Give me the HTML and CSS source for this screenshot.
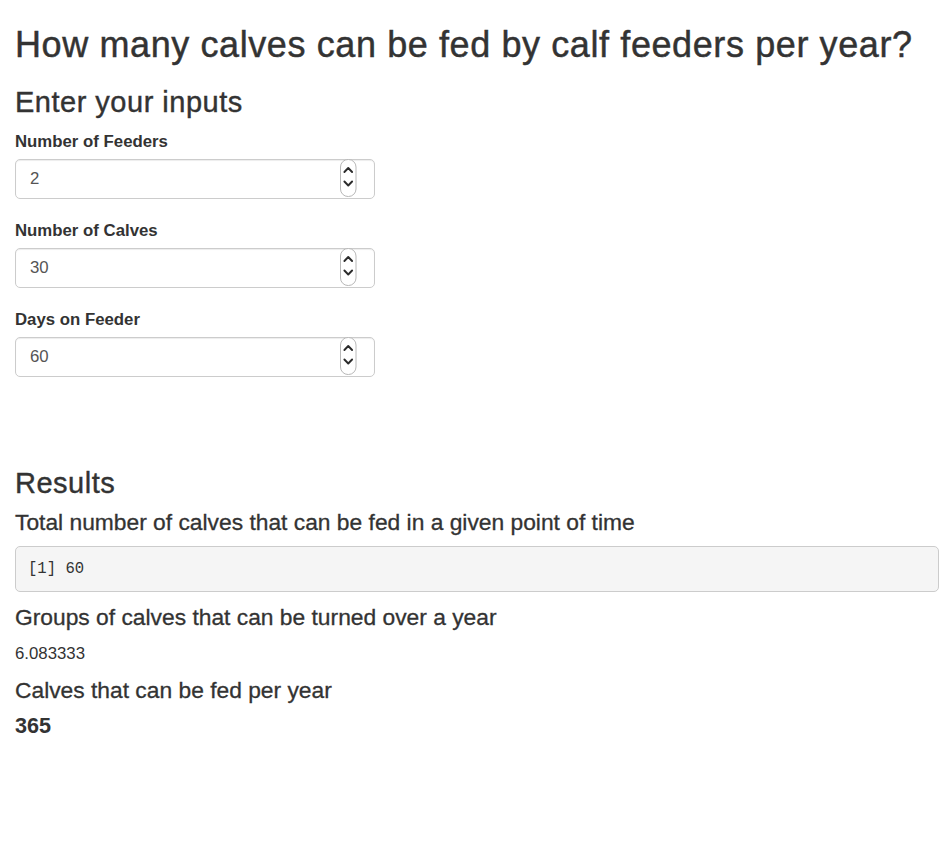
FILE: index.html
```html
<!DOCTYPE html>
<html lang="en">
<head>
<meta charset="utf-8">
<title>Calf feeders</title>
<link rel="stylesheet" href="styles.css">
</head>
<body>
<div class="page">
  <h2 class="title">How many calves can be fed by calf feeders per year?</h2>
  <h3 class="section">Enter your inputs</h3>
  <div class="inputs">
    <div class="field">
      <label class="field-label" for="feeders">Number of Feeders</label>
      <div class="num-input">
        <input id="feeders" class="num-value" type="text" value="2">
        <svg class="spinner" width="17" height="40" viewBox="0 0 17 40"><rect x="0.5" y="1.5" width="15.5" height="37" rx="7.5" fill="#fff" stroke="#b8b8b8"/><path d="M4.4 14 L8.25 10 L12.1 14" fill="none" stroke="#2b2b2b" stroke-width="1.9" stroke-linecap="round" stroke-linejoin="round"/><path d="M4.4 23.5 L8.25 27.5 L12.1 23.5" fill="none" stroke="#2b2b2b" stroke-width="1.9" stroke-linecap="round" stroke-linejoin="round"/></svg>
      </div>
    </div>
    <div class="field">
      <label class="field-label" for="calves">Number of Calves</label>
      <div class="num-input">
        <input id="calves" class="num-value" type="text" value="30">
        <svg class="spinner" width="17" height="40" viewBox="0 0 17 40"><rect x="0.5" y="1.5" width="15.5" height="37" rx="7.5" fill="#fff" stroke="#b8b8b8"/><path d="M4.4 14 L8.25 10 L12.1 14" fill="none" stroke="#2b2b2b" stroke-width="1.9" stroke-linecap="round" stroke-linejoin="round"/><path d="M4.4 23.5 L8.25 27.5 L12.1 23.5" fill="none" stroke="#2b2b2b" stroke-width="1.9" stroke-linecap="round" stroke-linejoin="round"/></svg>
      </div>
    </div>
    <div class="field">
      <label class="field-label" for="days">Days on Feeder</label>
      <div class="num-input">
        <input id="days" class="num-value" type="text" value="60">
        <svg class="spinner" width="17" height="40" viewBox="0 0 17 40"><rect x="0.5" y="1.5" width="15.5" height="37" rx="7.5" fill="#fff" stroke="#b8b8b8"/><path d="M4.4 14 L8.25 10 L12.1 14" fill="none" stroke="#2b2b2b" stroke-width="1.9" stroke-linecap="round" stroke-linejoin="round"/><path d="M4.4 23.5 L8.25 27.5 L12.1 23.5" fill="none" stroke="#2b2b2b" stroke-width="1.9" stroke-linecap="round" stroke-linejoin="round"/></svg>
      </div>
    </div>
  </div>
  <div class="results">
    <h3 class="section results-title">Results</h3>
    <h4 class="sub sub-first">Total number of calves that can be fed in a given point of time</h4>
    <pre class="output">[1] 60</pre>
    <h4 class="sub sub-groups">Groups of calves that can be turned over a year</h4>
    <div class="value">6.083333</div>
    <h4 class="sub sub-year">Calves that can be fed per year</h4>
    <div class="value-strong">365</div>
  </div>
</div>
</body>
</html>
```

FILE: styles.css
```css
html, body {
  margin: 0;
  padding: 0;
  background: #fff;
}

body {
  font-family: "Liberation Sans", Arial, sans-serif;
  font-size: 16.8px;
  line-height: 24px;
  color: #333;
}

.page {
  padding: 0 8px 0 15px;
}

.title {
  margin: 24.5px 0 0;
  font-size: 36px;
  line-height: 39.6px;
  font-weight: normal;
  letter-spacing: 0.6px;
  -webkit-text-stroke: 0.45px #333;
}

.section {
  margin: 22px 0 0;
  font-size: 29px;
  line-height: 32px;
  font-weight: normal;
  letter-spacing: 0.5px;
  -webkit-text-stroke: 0.4px #333;
}

.inputs {
  display: flex;
  flex-direction: column;
  gap: 20px;
  margin-top: 12.2px;
}

.field {
  display: flex;
  flex-direction: column;
  gap: 5px;
}

.field-label {
  font-weight: bold;
  font-size: 16.8px;
  line-height: 24px;
}

.num-input {
  display: flex;
  align-items: center;
  box-sizing: border-box;
  width: 360px;
  height: 40px;
  border: 1px solid #ccc;
  border-radius: 5px;
  background: #fff;
  box-shadow: inset 0 1px 1px rgba(0, 0, 0, 0.075);
  padding: 0 17px 0 14px;
}

.num-value {
  flex: 1;
  min-width: 0;
  border: 0;
  outline: none;
  background: transparent;
  padding: 0;
  margin: 0;
  font-family: "Liberation Sans", Arial, sans-serif;
  font-size: 16.8px;
  color: #555;
}

.spinner {
  display: block;
  flex: none;
  margin-top: -2px;
}

.results {
  display: flex;
  flex-direction: column;
  margin-top: 90px;
}

.results-title {
  margin-top: 0;
}

.sub {
  margin: 0;
  font-size: 22.8px;
  line-height: 25px;
  font-weight: normal;
  -webkit-text-stroke: 0.3px #333;
}

.sub-first {
  margin-top: 11px;
}

.sub-groups {
  margin-top: 13.5px;
}

.sub-year {
  margin-top: 12px;
}

.output {
  margin: 10.5px 0 0;
  box-sizing: border-box;
  height: 46px;
  padding: 11px 12px;
  background: #f5f5f5;
  border: 1px solid #ccc;
  border-radius: 5px;
  font-family: "Liberation Mono", "Courier New", monospace;
  font-size: 15.6px;
  line-height: 22px;
  color: #333;
}

.value {
  margin-top: 12px;
  font-size: 16.8px;
  line-height: 24px;
}

.value-strong {
  margin-top: 10.5px;
  font-size: 21.6px;
  line-height: 23.8px;
  font-weight: bold;
}
```
